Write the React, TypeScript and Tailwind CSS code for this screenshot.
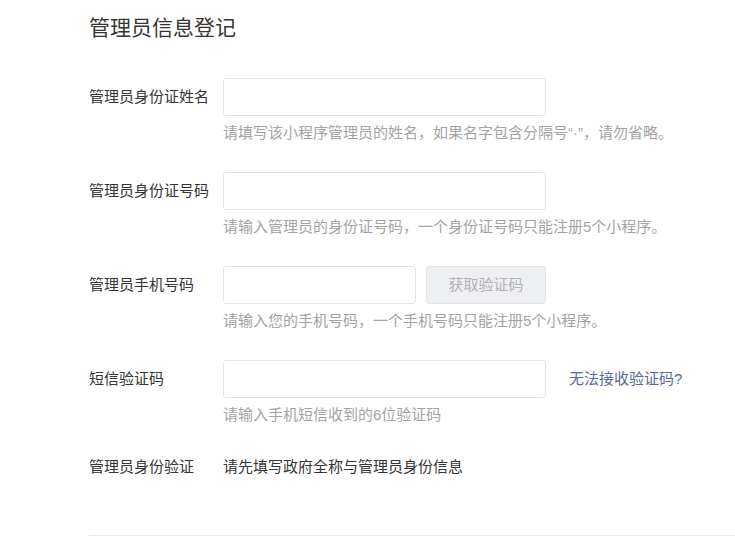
import React from 'react';

const font = "font-['Liberation_Sans','Noto_Sans_CJK_SC',sans-serif]";

const Row: React.FC<{ label: string; hint?: string; className?: string; children: React.ReactNode }> = ({
  label,
  hint,
  className = '',
  children,
}) => (
  <div className={`flex ${className}`}>
    <div className="w-[134px] shrink-0 text-[15px] leading-[38px] text-[#353535]">{label}</div>
    <div className="flex flex-col">
      {children}
      {hint && <p className="mt-[7px] text-[15px] leading-[20px] text-[#a3a3a3]">{hint}</p>}
    </div>
  </div>
);

const inputCls =
  'h-[38px] rounded-[3px] border border-[#e4e4e8] bg-white px-2 text-[15px] outline-none';

export default function App() {
  return (
    <div className={`min-h-[553px] w-[735px] bg-white pl-[89px] pt-[16px] ${font}`}>
      <h2 className="text-[21px] leading-[24px] text-[#353535]">管理员信息登记</h2>

      <div className="mt-[38px]">
        <Row label="管理员身份证姓名" hint="请填写该小程序管理员的姓名，如果名字包含分隔号“·”，请勿省略。" className="mb-[29px]">
          <input className={`${inputCls} w-[323px]`} />
        </Row>

        <Row label="管理员身份证号码" hint="请输入管理员的身份证号码，一个身份证号码只能注册5个小程序。" className="mb-[29px]">
          <input className={`${inputCls} w-[323px]`} />
        </Row>

        <Row label="管理员手机号码" hint="请输入您的手机号码，一个手机号码只能注册5个小程序。" className="mb-[29px]">
          <div className="flex gap-[10px]">
            <input className={`${inputCls} w-[193px]`} />
            <button
              disabled
              className="h-[38px] w-[120px] rounded-[3px] border border-[#e4e4e8] bg-[#eeeff3] text-[15px] text-[#b2b2b2]"
            >
              获取验证码
            </button>
          </div>
        </Row>

        <Row label="短信验证码" hint="请输入手机短信收到的6位验证码">
          <div className="flex items-center">
            <input className={`${inputCls} w-[323px]`} />
            <a href="#" className="ml-[23px] text-[15px] text-[#576b95]">
              无法接收验证码?
            </a>
          </div>
        </Row>

        <div className="mt-[23px] flex">
          <div className="w-[134px] shrink-0 text-[15px] leading-[38px] text-[#353535]">管理员身份验证</div>
          <div className="text-[15px] leading-[38px] text-[#353535]">请先填写政府全称与管理员身份信息</div>
        </div>
      </div>

      <div className="mt-[49px] border-t border-[#e7e7eb]" />
    </div>
  );
}
